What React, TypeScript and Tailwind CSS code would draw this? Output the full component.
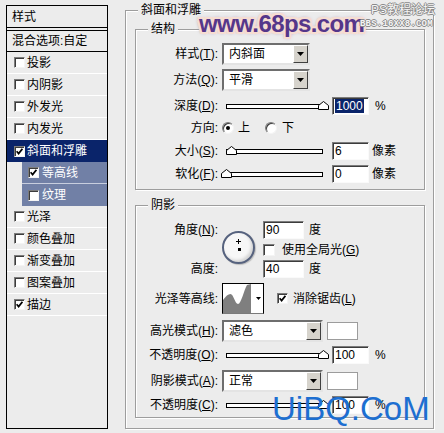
import React from "react";

type Kids = { children?: React.ReactNode };

const Check = ({ checked, extra = "" }: { checked?: boolean; extra?: string }) => (
  <span
    className={`inline-flex w-[11px] h-[11px] shrink-0 items-center justify-center bg-white border border-t-[#7c7c7c] border-l-[#7c7c7c] border-b-[#f4f4f4] border-r-[#f4f4f4] shadow-[inset_1px_1px_0_#3c3c3c] ${extra}`}
  >
    {checked && (
      <svg width="7" height="7" viewBox="0 0 7 7">
        <path d="M0.6 3.2 L2.6 5.6 L6.4 0.8" stroke="black" strokeWidth="1.7" fill="none" />
      </svg>
    )}
  </span>
);

const Hot = ({ t, k }: { t: string; k?: string }) => (
  <>
    {t}
    {k && (
      <>
        (<span className="underline underline-offset-[1px]">{k}</span>)
      </>
    )}
    :
  </>
);

const Label = ({ children }: Kids) => (
  <div className="w-[82px] shrink-0 text-right whitespace-nowrap">{children}</div>
);

const Field = ({ children }: Kids) => (
  <div className="w-[37px] h-[18px] shrink-0 bg-white border border-t-[#7c7c7c] border-l-[#7c7c7c] border-b-[#fafafa] border-r-[#fafafa] shadow-[inset_1px_1px_0_#3c3c3c] flex items-center pl-[2px]">
    {children}
  </div>
);

const Arrow = () => (
  <svg width="7" height="4" viewBox="0 0 7 4">
    <path d="M0 0 H7 L3.5 4 Z" fill="black" />
  </svg>
);

const Select = ({ w, children }: { w: string } & Kids) => (
  <div
    className={`${w} h-[22px] shrink-0 bg-white border-2 border-t-[#6e6e6e] border-l-[#6e6e6e] border-b-[#e4e4e4] border-r-[#e4e4e4] flex items-stretch`}
  >
    <div className="flex-1 flex items-center pl-[5px]">{children}</div>
    <div className="w-[15px] bg-[#d6d3cc] border border-t-white border-l-white border-b-[#404040] border-r-[#404040] flex items-center justify-center">
      <Arrow />
    </div>
  </div>
);

const Slider = ({ thumb }: { thumb: string }) => (
  <div className="relative w-[106px] h-[18px] shrink-0">
    <div className="absolute left-[4px] right-[5px] top-[7px] h-[5px] border border-black bg-white" />
    <svg className={`absolute top-[4px] ${thumb}`} width="11" height="9" viewBox="0 0 11 9">
      <path d="M5.5 0.5 L10.5 4.5 L10.5 8.5 L0.5 8.5 L0.5 4.5 Z" fill="white" stroke="black" />
    </svg>
  </div>
);

const Radio = ({ on }: { on?: boolean }) => (
  <span className="w-[12px] h-[12px] shrink-0 rounded-full bg-white border border-t-[#7c7c7c] border-l-[#7c7c7c] border-b-[#f4f4f4] border-r-[#f4f4f4] shadow-[inset_1px_1px_0_#3c3c3c] flex items-center justify-center">
    {on && <span className="w-[4px] h-[4px] rounded-full bg-black" />}
  </span>
);

const Item = ({ label, checked }: { label: string; checked?: boolean }) => (
  <div className="h-[22px] border-b border-white flex items-center pl-[7px] gap-[2px]">
    <Check checked={checked} />
    <span>{label}</span>
  </div>
);

const SubItem = ({ label, checked, last }: { label: string; checked?: boolean; last?: boolean }) => (
  <div className="h-[22px] flex">
    <div className="w-[15px]" />
    <div
      className={`flex-1 bg-[#7180a6] text-white flex items-center pl-[6px] gap-[3px] ${
        last ? "" : "border-b border-[#c8cede]"
      }`}
    >
      <Check checked={checked} />
      <span>{label}</span>
    </div>
  </div>
);

const LeftPanel = () => (
  <div className="w-[102px] h-[424px] shrink-0 border border-black bg-[#ececec] flex flex-col">
    <div className="h-[22px] border-b border-black flex items-center pl-[5px]">样式</div>
    <div className="h-[2px]" />
    <div className="h-[22px] border-t border-b border-black flex items-center pl-[5px]">混合选项:自定</div>
    <Item label="投影" />
    <Item label="内阴影" />
    <Item label="外发光" />
    <Item label="内发光" />
    <div className="h-[22px] bg-[#0a246a] text-white flex items-center pl-[7px] gap-[2px]">
      <Check checked />
      <span>斜面和浮雕</span>
    </div>
    <SubItem label="等高线" checked />
    <SubItem label="纹理" last />
    <Item label="光泽" />
    <Item label="颜色叠加" />
    <Item label="渐变叠加" />
    <Item label="图案叠加" />
    <Item label="描边" checked />
  </div>
);

const Group = ({ title, cls, children }: { title: string; cls: string } & Kids) => (
  <div
    className={`relative shrink-0 border border-[#9d9d9d] shadow-[inset_1px_1px_0_#ffffff,1px_1px_0_#ffffff] ${cls}`}
  >
    <div className="absolute -top-[8px] left-[12px] px-[3px] bg-[#ececec] leading-[14px]">{title}</div>
    {children}
  </div>
);

const Row = ({ cls, children }: { cls: string } & Kids) => (
  <div className={`flex items-center ${cls}`}>{children}</div>
);

const Contour = () => (
  <div className="w-[42px] h-[31px] shrink-0 border border-t-black border-l-black border-r-black border-b-[#7a7a7a] bg-white flex">
    <svg width="29" height="29" viewBox="0 0 29 29" className="shrink-0">
      <path
        d="M0 29 L0 16 C3 12 5 10 7.5 10 C10.5 10 12 20 15 20 C18 20 21 6 24 1 L28 0 L28 29 Z"
        fill="#7f7f7f"
      />
    </svg>
    <div className="flex-1 border-l border-white flex items-center justify-center">
      <svg width="5" height="3" viewBox="0 0 5 3">
        <path d="M0 0 H5 L2.5 3 Z" fill="black" />
      </svg>
    </div>
  </div>
);

export default function App() {
  return (
    <div className="relative w-[444px] h-[433px] overflow-hidden bg-[#ececec] text-[12px] leading-none text-black font-['Liberation_Sans','Noto_Sans_CJK_SC',sans-serif] flex items-start pl-[6px] pt-[5px]">
      <LeftPanel />

      <Group title="斜面和浮雕" cls="ml-[17px] mt-[5px] w-[309px] h-[419px] pl-[9px] pt-[18px]">
        <Group title="结构" cls="w-[290px] h-[161px] flex flex-col">
          <Row cls="mt-[13px] h-[22px]">
            <Label>
              <Hot t="样式" k="T" />
            </Label>
            <div className="ml-[4px]">
              <Select w="w-[88px]">内斜面</Select>
            </div>
          </Row>
          <Row cls="mt-[4px] h-[22px]">
            <Label>
              <Hot t="方法" k="Q" />
            </Label>
            <div className="ml-[4px]">
              <Select w="w-[88px]">平滑</Select>
            </div>
          </Row>
          <Row cls="mt-[6px] h-[18px]">
            <Label>
              <Hot t="深度" k="D" />
            </Label>
            <div className="ml-[4px]">
              <Slider thumb="left-[96px]" />
            </div>
            <div className="ml-[4px]">
              <Field>
                <span className="bg-[#0a246a] text-white px-[1px] py-[1px]">1000</span>
              </Field>
            </div>
            <span className="ml-[6px]">%</span>
          </Row>
          <Row cls="mt-[5px] h-[16px]">
            <Label>
              <Hot t="方向" />
            </Label>
            <div className="ml-[4px] flex items-center">
              <Radio on />
              <span className="ml-[4px]">上</span>
              <span className="ml-[15px]">
                <Radio />
              </span>
              <span className="ml-[5px]">下</span>
            </div>
          </Row>
          <Row cls="mt-[6px] h-[18px]">
            <Label>
              <Hot t="大小" k="S" />
            </Label>
            <div className="ml-[4px]">
              <Slider thumb="left-[4px]" />
            </div>
            <div className="ml-[4px]">
              <Field>6</Field>
            </div>
            <span className="ml-[3px]">像素</span>
          </Row>
          <Row cls="mt-[5px] h-[18px]">
            <Label>
              <Hot t="软化" k="F" />
            </Label>
            <div className="ml-[4px]">
              <Slider thumb="-left-[1px]" />
            </div>
            <div className="ml-[4px]">
              <Field>0</Field>
            </div>
            <span className="ml-[3px]">像素</span>
          </Row>
        </Group>

        <Group title="阴影" cls="mt-[15px] w-[290px] h-[213px] flex flex-col">
          <div className="mt-[15px] flex items-start">
            <div className="flex flex-col">
              <Row cls="h-[18px]">
                <Label>
                  <Hot t="角度" k="N" />
                </Label>
              </Row>
              <div className="h-[19px]" />
              <Row cls="mt-[2px] h-[18px]">
                <Label>
                  <Hot t="高度" />
                </Label>
              </Row>
            </div>
            <div className="ml-[4px] mt-[10px] relative w-[33px] h-[33px] rounded-full border-2 border-[#56627e] bg-[#f7f7f7] shadow-[inset_-2px_-2px_3px_#d4d4d4,1px_1px_1px_#bdbdbd]">
              <div className="absolute left-[14px] top-[6px] w-[1px] h-[5px] bg-black" />
              <div className="absolute left-[12px] top-[8px] w-[5px] h-[1px] bg-black" />
              <div className="absolute left-[14px] top-[15px] w-[3px] h-[3px] bg-black" />
            </div>
            <div className="ml-[8px] flex flex-col">
              <Row cls="h-[18px]">
                <div className="w-[41px] h-[18px] bg-white border border-t-[#7c7c7c] border-l-[#7c7c7c] border-b-[#fafafa] border-r-[#fafafa] shadow-[inset_1px_1px_0_#3c3c3c] flex items-center pl-[2px]">
                  90
                </div>
                <span className="ml-[5px]">度</span>
              </Row>
              <Row cls="mt-[3px] h-[16px]">
                <Check extra="w-[12px] h-[12px]" />
                <span className="ml-[7px]">
                  使用全局光(<span className="underline underline-offset-[1px]">G</span>)
                </span>
              </Row>
              <Row cls="mt-[2px] h-[18px]">
                <div className="w-[41px] h-[18px] bg-white border border-t-[#7c7c7c] border-l-[#7c7c7c] border-b-[#fafafa] border-r-[#fafafa] shadow-[inset_1px_1px_0_#3c3c3c] flex items-center pl-[2px]">
                  40
                </div>
                <span className="ml-[5px]">度</span>
              </Row>
            </div>
          </div>

          <Row cls="mt-[5px] h-[31px]">
            <Label>
              <Hot t="光泽等高线" />
            </Label>
            <div className="ml-[4px]">
              <Contour />
            </div>
            <Check checked extra="ml-[13px]" />
            <span className="ml-[5px]">
              消除锯齿(<span className="underline underline-offset-[1px]">L</span>)
            </span>
          </Row>

          <Row cls="mt-[6px] h-[22px]">
            <Label>
              <Hot t="高光模式" k="H" />
            </Label>
            <div className="ml-[4px]">
              <Select w="w-[101px]">滤色</Select>
            </div>
            <div className="ml-[4px] w-[31px] h-[18px] bg-white border border-[#9c9c9c]" />
          </Row>
          <Row cls="mt-[4px] h-[18px]">
            <Label>
              <Hot t="不透明度" k="O" />
            </Label>
            <div className="ml-[4px]">
              <Slider thumb="left-[96px]" />
            </div>
            <div className="ml-[4px]">
              <Field>100</Field>
            </div>
            <span className="ml-[6px]">%</span>
          </Row>
          <Row cls="mt-[6px] h-[22px]">
            <Label>
              <Hot t="阴影模式" k="A" />
            </Label>
            <div className="ml-[4px]">
              <Select w="w-[101px]">正常</Select>
            </div>
            <div className="ml-[4px] w-[31px] h-[18px] bg-white border border-[#9c9c9c]" />
          </Row>
          <Row cls="mt-[4px] h-[18px]">
            <Label>
              <Hot t="不透明度" k="C" />
            </Label>
            <div className="ml-[4px]">
              <Slider thumb="left-[96px]" />
            </div>
            <div className="ml-[4px]">
              <Field>100</Field>
            </div>
            <span className="ml-[6px]">%</span>
          </Row>
        </Group>
      </Group>

      {/* watermarks */}
      <div className="absolute left-[199px] top-[12px] text-[24px] leading-[24px] font-bold tracking-[-0.6px] text-[#55368a] [text-shadow:2px_0_#f6ddd2,-2px_0_#f6ddd2,0_2px_#f6ddd2,0_-2px_#f6ddd2,2px_2px_#f6ddd2,-2px_-2px_#f6ddd2,2px_-2px_#f6ddd2,-2px_2px_#f6ddd2,0_0_4px_#7a5a9a]">
        www.68ps.com
      </div>
      <div className="absolute left-[371px] top-[4px] text-[12px] leading-[13px] text-[#f4f4f4] [text-shadow:1px_0_#8a8a8a,-1px_0_#8a8a8a,0_1px_#8a8a8a,0_-1px_#8a8a8a]">
        PS教程论坛
      </div>
      <div className="absolute left-[360px] top-[19px] text-[9px] leading-[10px] font-['Liberation_Mono',monospace] font-bold tracking-[0.2px] text-[#f4f4f4] [text-shadow:1px_0_#8a8a8a,-1px_0_#8a8a8a,0_1px_#8a8a8a,0_-1px_#8a8a8a]">
        BBS.16XX8.COM
      </div>
      <div className="absolute left-[272px] top-[392px] text-[33px] leading-[33px] text-[#1d6fd1]">
        UiBQ.CoM
      </div>
    </div>
  );
}
